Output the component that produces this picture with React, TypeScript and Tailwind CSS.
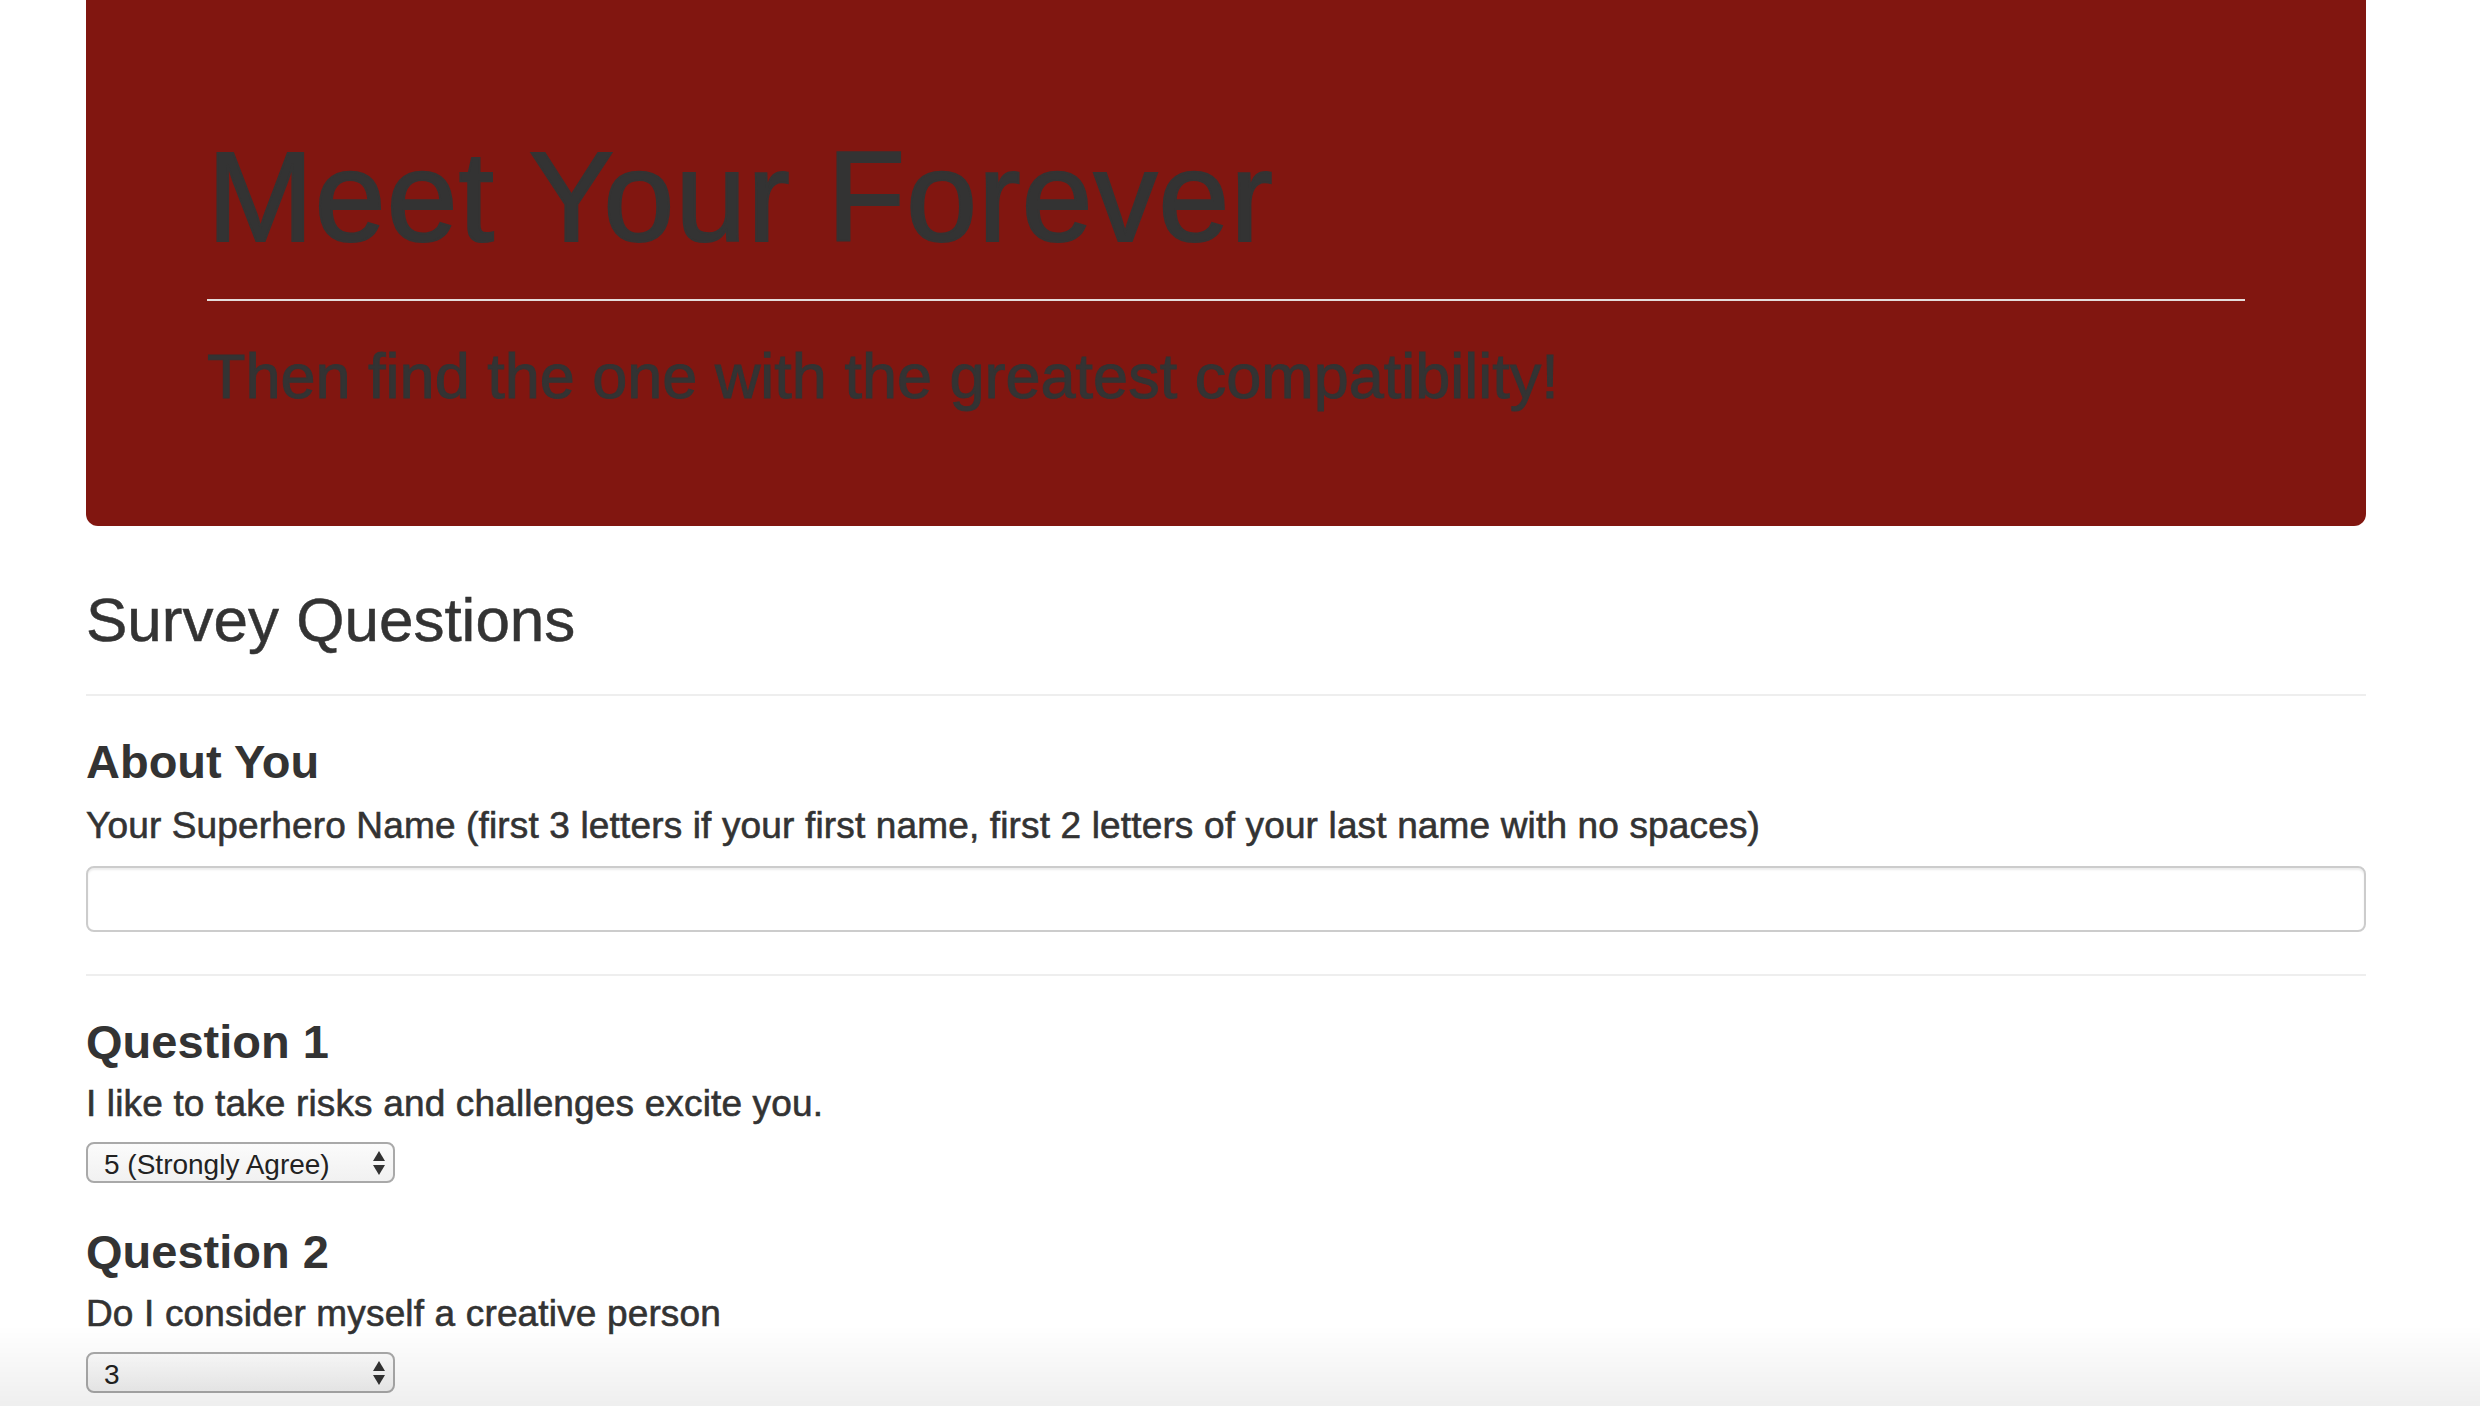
import React, { useState } from 'react';

const questions = [
  { id: 1, text: 'I like to take risks and challenges excite you.', value: '5' },
  { id: 2, text: 'Do I consider myself a creative person', value: '3' },
];

const options = [
  { value: '1', label: '1 (Strongly Disagree)' },
  { value: '2', label: '2' },
  { value: '3', label: '3' },
  { value: '4', label: '4' },
  { value: '5', label: '5 (Strongly Agree)' },
];

function ScoreSelect({ value, onChange }: { value: string; onChange: (v: string) => void }) {
  return (
    <div className="relative w-[309px]">
      <select
        value={value}
        onChange={(e) => onChange(e.target.value)}
        className="block h-[41px] w-full appearance-none rounded-[8px] border-2 border-[#a9a9a9] bg-gradient-to-b from-[#fbfbfb] to-[#f1f1f1] pl-[16px] text-[28px] text-[#222] outline-none"
      >
        {options.map((o) => (
          <option key={o.value} value={o.value}>{o.label}</option>
        ))}
      </select>
      {/* native mac-style up/down arrows */}
      <svg className="pointer-events-none absolute right-[10px] top-[9px]" width="12" height="24" viewBox="0 0 12 24">
        <path d="M6 0 L12 10 L0 10 Z" fill="#333" />
        <path d="M0 14 L12 14 L6 24 Z" fill="#333" />
      </svg>
    </div>
  );
}

export default function App() {
  const [name, setName] = useState('');
  const [answers, setAnswers] = useState<Record<number, string>>({ 1: '5', 2: '3' });

  return (
    <div className="min-h-[1406px] bg-white font-['Liberation_Sans',Arial,sans-serif] text-[#333]">
      <div className="ml-[86px] w-[2280px] pb-[40px]">
        <div className="rounded-b-[12px] bg-[#811610] px-[121px] pb-[115px] pt-[127px]">
          <h1 className="m-0 text-[128px] leading-[1.1] tracking-[0.8px] [-webkit-text-stroke:2px_#333]">Meet Your Forever</h1>
          <hr className="mt-[31px] border-0 border-t-2 border-[#e4dcdb]" />
          <h2 className="mt-[41px] text-[63px] leading-[1.1] [-webkit-text-stroke:1px_#333]">Then find the one with the greatest compatibility!</h2>
        </div>

        <h2 className="mt-[60px] text-[62px] leading-[1.1] [-webkit-text-stroke:0.5px_#333]">Survey Questions</h2>
        <hr className="mt-[40px] border-0 border-t-2 border-[#eee]" />

        <h3 className="mt-[40px] text-[47px] font-bold leading-[1.1]">About You</h3>
        <label htmlFor="hero-name" className="mt-[13px] block text-[37px] leading-[1.36] tracking-[0.15px] [-webkit-text-stroke:0.6px_#333]">
          Your Superhero Name (first 3 letters if your first name, first 2 letters of your last name with no spaces)
        </label>
        <input
          id="hero-name" type="text" value={name} onChange={(e) => setName(e.target.value)}
          className="mt-[15px] block h-[66px] w-full rounded-[8px] border-2 border-[#ccc] px-[24px] text-[28px] shadow-[inset_0_2px_2px_rgba(0,0,0,0.075)] outline-none"
        />
        <hr className="mt-[42px] border-0 border-t-2 border-[#eee]" />

        {questions.map((q, i) => (
          <div key={q.id} className={i === 0 ? 'mt-[40px]' : 'mt-[43px]'}>
            <h3 className="text-[47px] font-bold leading-[1.1]">Question {q.id}</h3>
            <p className="mt-[11px] text-[37px] leading-[1.36] tracking-[0.15px] [-webkit-text-stroke:0.6px_#333]">{q.text}</p>
            <div className="mt-[13px]">
              <ScoreSelect value={answers[q.id]} onChange={(v) => setAnswers({ ...answers, [q.id]: v })} />
            </div>
          </div>
        ))}
      </div>
      <div className="pointer-events-none fixed inset-x-0 bottom-0 h-[80px] bg-gradient-to-b from-transparent to-black/[0.065]" />
    </div>
  );
}
